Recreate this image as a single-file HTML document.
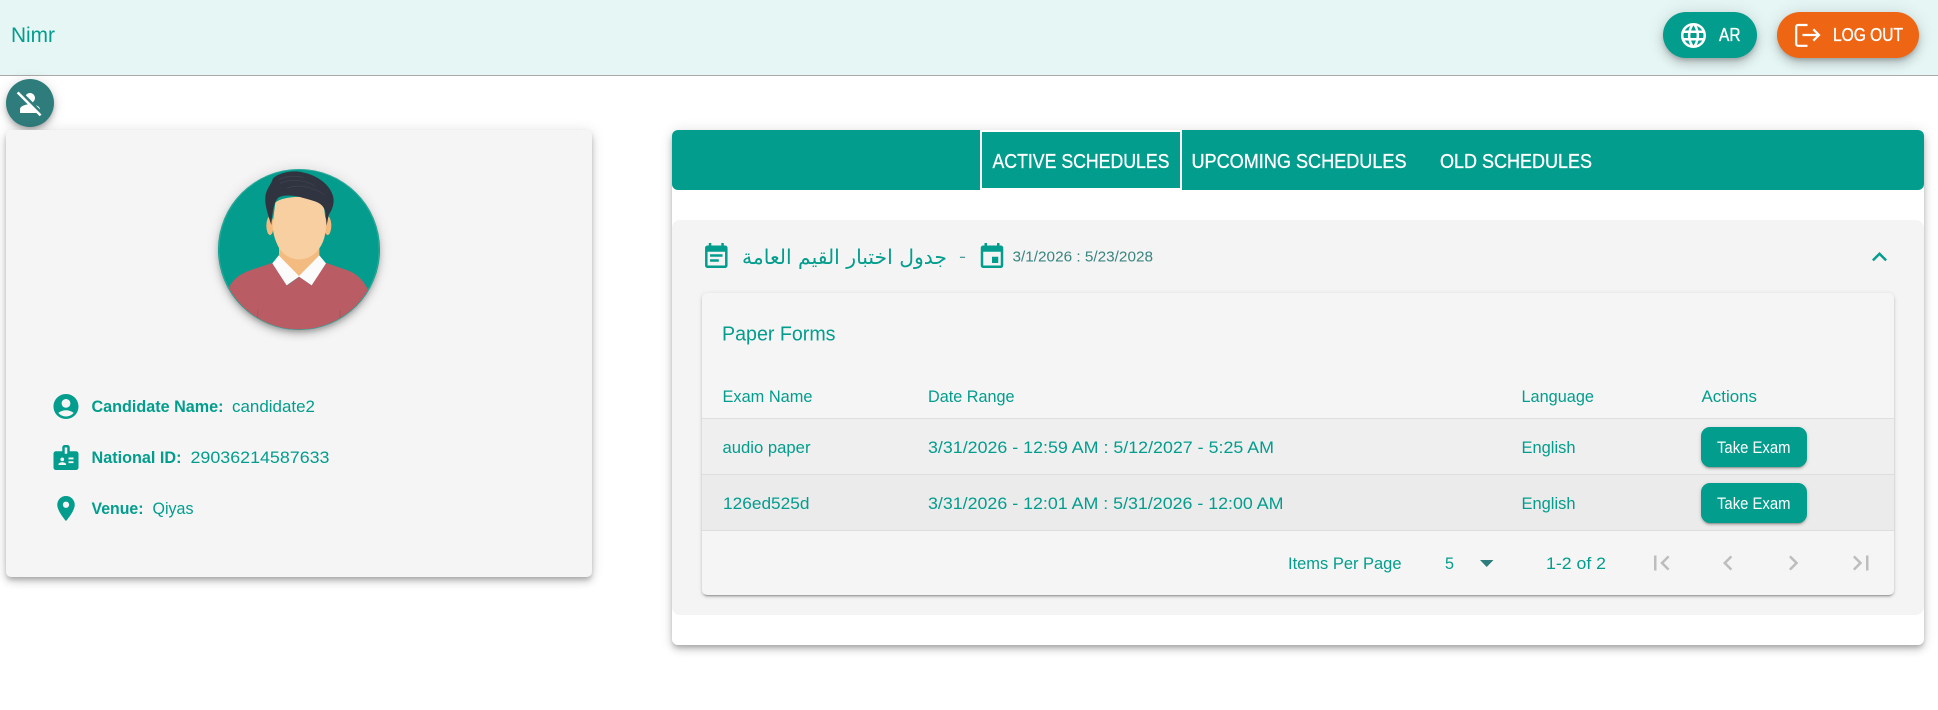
<!DOCTYPE html>
<html lang="en"><head><meta charset="utf-8"><title>Nimr</title>
<style>
html,body{margin:0;padding:0;width:1938px;height:710px;overflow:hidden;background:#fff}
.b{position:absolute;box-sizing:border-box}
.e8{box-shadow:0 3px 5px -1px rgba(0,0,0,.2),0 6px 10px 0 rgba(0,0,0,.14),0 1px 18px 0 rgba(0,0,0,.12)}
.e2{box-shadow:0 3px 1px -2px rgba(0,0,0,.2),0 2px 2px 0 rgba(0,0,0,.14),0 1px 5px 0 rgba(0,0,0,.12)}
.e5{box-shadow:0 3px 5px -1px rgba(0,0,0,.2),0 5px 8px 0 rgba(0,0,0,.14),0 1px 14px 0 rgba(0,0,0,.12)}
svg{position:absolute;left:0;top:0}
text{font-family:"Liberation Sans",sans-serif;fill:#039d8d;font-size:17px}
.w{fill:#fff}
.med{stroke:#fff;stroke-width:.35px}
.bd{font-weight:700}
.tab{font-size:20px;fill:#fff;stroke:#fff;stroke-width:.3px}
.ar{font-family:"DejaVu Sans","Liberation Sans",sans-serif;font-size:20.5px}
</style></head><body>
<div class="b" style="left:0;top:0;width:1938px;height:76px;background:#e6f6f5;border-bottom:1px solid #aaa"></div>
<div class="b e8" style="left:1663px;top:12px;width:94px;height:46px;border-radius:23px;background:#039d8d"></div>
<div class="b e8" style="left:1777px;top:12px;width:142px;height:46px;border-radius:23px;background:#ee6513"></div>
<div class="b e5" style="left:6px;top:79px;width:48px;height:48px;border-radius:50%;background:#2e7c7b"></div>
<div class="b e5" style="left:6px;top:130px;width:586px;height:447px;border-radius:5px;background:#f5f5f5"></div>
<div class="b e5" style="left:218px;top:169px;width:162px;height:161px;border-radius:50%;background:#039d8d"></div>
<div class="b e5" style="left:672px;top:130px;width:1252px;height:515px;border-radius:6px;background:#fff"></div>
<div class="b" style="left:672px;top:130px;width:1252px;height:60px;border-radius:6px;background:#039d8d"></div>
<div class="b" style="left:980px;top:130px;width:202px;height:60px;border:2px solid #fff;background:#039d8d"></div>
<div class="b" style="left:672px;top:220px;width:1252px;height:395px;border-radius:8px;background:#f4f4f4"></div>
<div class="b e2" style="left:702px;top:293px;width:1192px;height:302px;border-radius:5px;background:#f5f5f5"></div>
<div class="b" style="left:702px;top:418px;width:1192px;height:57px;background:#efefef;border-top:1px solid #dedede;border-bottom:1px solid #dedede"></div>
<div class="b" style="left:702px;top:475px;width:1192px;height:56px;background:#ebebeb;border-bottom:1px solid #dedede"></div>
<div class="b e2" style="left:1701px;top:427px;width:106px;height:40px;border-radius:9px;background:#039d8d"></div>
<div class="b e2" style="left:1701px;top:483px;width:106px;height:40px;border-radius:9px;background:#039d8d"></div>

<svg width="1938" height="710" viewBox="0 0 1938 710" xmlns="http://www.w3.org/2000/svg">
<defs><clipPath id="av"><circle cx="297" cy="268.5" r="240"/></clipPath></defs>

<text x="11" y="42" style="font-size:21px" textLength="44" lengthAdjust="spacingAndGlyphs">Nimr</text>

<!-- language -->
<path fill="#fff" transform="translate(1678.5,20.5) scale(1.25)" d="M11.99 2C6.47 2 2 6.48 2 12s4.47 10 9.99 10C17.52 22 22 17.52 22 12S17.52 2 11.99 2zm6.93 6h-2.95c-.32-1.25-.78-2.45-1.38-3.56 1.84.63 3.37 1.91 4.33 3.56zM12 4.04c.83 1.2 1.48 2.53 1.91 3.96h-3.82c.43-1.43 1.08-2.76 1.91-3.96zM4.26 14C4.1 13.36 4 12.69 4 12s.1-1.36.26-2h3.38c-.08.66-.14 1.32-.14 2 0 .68.06 1.34.14 2H4.26zm.82 2h2.95c.32 1.25.78 2.45 1.38 3.56-1.84-.63-3.37-1.9-4.33-3.56zm2.95-8H5.08c.96-1.66 2.49-2.93 4.33-3.56C8.81 5.55 8.35 6.75 8.03 8zM12 19.96c-.83-1.2-1.48-2.53-1.91-3.96h3.82c-.43 1.43-1.08 2.76-1.91 3.96zM14.34 14H9.66c-.09-.66-.16-1.32-.16-2 0-.68.07-1.35.16-2h4.68c.09.65.16 1.32.16 2 0 .68-.07 1.34-.16 2zm.25 5.56c.6-1.11 1.06-2.31 1.38-3.56h2.95c-.96 1.65-2.49 2.93-4.33 3.56zM16.36 14c.08-.66.14-1.32.14-2 0-.68-.06-1.34-.14-2h3.38c.16.64.26 1.31.26 2s-.1 1.36-.26 2h-3.38z"/>
<text class="w med" x="1719" y="41" style="font-size:18px" textLength="21.5" lengthAdjust="spacingAndGlyphs">AR</text>
<!-- logout -->
<path fill="none" stroke="#fff" stroke-width="2.2" d="M1807.5 25H1798a1.8 1.8 0 0 0-1.8 1.8V44a1.8 1.8 0 0 0 1.8 1.8h9.5"/>
<path fill="none" stroke="#fff" stroke-width="2.2" d="M1802.5 35H1819M1813.3 29.3L1819 35L1813.3 40.7"/>
<text class="w med" x="1833" y="41" style="font-size:18px" textLength="70" lengthAdjust="spacingAndGlyphs">LOG OUT</text>

<!-- person_off -->
<path fill="#fff" transform="translate(15,88) scale(1.25)" d="M8.65 5.82C9.36 4.72 10.6 4 12 4c2.21 0 4 1.79 4 4 0 1.4-.72 2.64-1.82 3.35L8.65 5.82zM20 17.17c-.02-1.1-.63-2.11-1.61-2.62-.54-.28-1.13-.54-1.77-.76L20 17.17zm1.19 4.02L2.81 2.81 1.39 4.22l8.89 8.89c-1.81.23-3.39.79-4.67 1.45C4.61 15.07 4 16.1 4 17.22V20h13.17l2.61 2.61 1.41-1.42z"/>

<!-- avatar -->
<g transform="translate(200,160) scale(.33333)">
<circle cx="297" cy="268.5" r="240" fill="#049c8d" stroke="#35ad9f" stroke-width="2"/>
<g clip-path="url(#av)">
<path fill="#b95c64" d="M85 387C100 352 130 337 165 326L222 307L262 376L297 350L335 376L374 307L440 330C470 340 490 360 506 392L506 540L85 540Z"/>
<path fill="none" stroke="#9c5a5c" stroke-width="3" d="M173 450V475M420 450V475"/>
</g>
<path fill="#f3bb7f" d="M237 250V290L297 350L358 290V250Z"/>
<path fill="#fbfbfb" d="M236 286L217 310L260 376L297 350L335 376L378 310L358 286L297 348Z"/>
<ellipse cx="210" cy="197" rx="11" ry="28" fill="#f3bb7f"/>
<ellipse cx="383" cy="197" rx="11" ry="28" fill="#f3bb7f"/>
<path fill="#f7cfa0" d="M226 128C250 106 340 104 370 128L378 190C378 230 368 250 360 262C340 292 315 298 297 298C280 298 255 292 236 262C228 245 218 225 218 190Z"/>
<path fill="#2f3440" d="M214 195C206 170 193 135 196 110C199 85 213 75 219 55C240 36 282 30 308 37C350 45 388 72 398 105C406 128 396 150 386 165L380 197L376 155C370 135 358 128 338 122C300 110 262 100 236 112C222 125 218 150 214 195Z"/>
<path fill="none" stroke="#3f4450" stroke-width="2" d="M240 70C270 55 320 60 345 78M260 85C290 72 335 78 375 105M235 60C260 45 290 48 310 52"/>
</g>

<!-- info rows -->
<path fill="#039d8d" transform="translate(51,391.5) scale(1.25)" d="M12 2C6.48 2 2 6.48 2 12s4.48 10 10 10 10-4.48 10-10S17.52 2 12 2zm0 4c1.93 0 3.5 1.57 3.5 3.5S13.93 13 12 13s-3.5-1.57-3.5-3.5S10.07 6 12 6zm0 14c-2.03 0-4.43-.82-6.14-2.88C7.55 15.8 9.68 15 12 15s4.45.8 6.14 2.12C16.43 19.18 14.03 20 12 20z"/>
<text class="bd" x="91.5" y="412" textLength="132" lengthAdjust="spacingAndGlyphs">Candidate Name:</text>
<text x="232" y="412" textLength="83" lengthAdjust="spacingAndGlyphs">candidate2</text>
<path fill="#039d8d" transform="translate(51,442.5) scale(1.25)" d="M20 7h-5V4c0-1.1-.9-2-2-2h-2c-1.1 0-2 .9-2 2v3H4c-1.1 0-2 .9-2 2v11c0 1.1.9 2 2 2h16c1.1 0 2-.9 2-2V9c0-1.1-.9-2-2-2zM9 12c.83 0 1.5.67 1.5 1.5S9.83 15 9 15s-1.5-.67-1.5-1.5S8.17 12 9 12zm3 6H6v-.75c0-1 2-1.5 3-1.5s3 .5 3 1.5V18zm1-9h-2V4h2v5zm5 7.5h-4V15h4v1.5zm0-3h-4V12h4v1.5z"/>
<text class="bd" x="91.5" y="463" textLength="90" lengthAdjust="spacingAndGlyphs">National ID:</text>
<text x="190.5" y="463" textLength="139" lengthAdjust="spacingAndGlyphs">29036214587633</text>
<path fill="#039d8d" transform="translate(51,493.5) scale(1.25)" d="M12 2C8.13 2 5 5.13 5 9c0 5.25 7 13 7 13s7-7.75 7-13c0-3.87-3.13-7-7-7zm0 9.5c-1.38 0-2.5-1.12-2.5-2.5s1.12-2.5 2.5-2.5 2.5 1.12 2.5 2.5-1.12 2.5-2.5 2.5z"/>
<text class="bd" x="91.5" y="514" textLength="52" lengthAdjust="spacingAndGlyphs">Venue:</text>
<text x="152.5" y="514" textLength="41" lengthAdjust="spacingAndGlyphs">Qiyas</text>

<!-- tabs -->
<text class="tab" x="992.5" y="168" textLength="177" lengthAdjust="spacingAndGlyphs">ACTIVE SCHEDULES</text>
<text class="tab" x="1191.5" y="168" textLength="215" lengthAdjust="spacingAndGlyphs">UPCOMING SCHEDULES</text>
<text class="tab" x="1440" y="168" textLength="152" lengthAdjust="spacingAndGlyphs">OLD SCHEDULES</text>

<!-- accordion header -->
<path fill="#039d8d" transform="translate(701.3,241.7) scale(1.25)" d="M17 10H7v2h10v-2zm2-7h-1V1h-2v2H8V1H6v2H5c-1.11 0-1.99.9-1.99 2L3 19c0 1.1.89 2 2 2h14c1.1 0 2-.9 2-2V5c0-1.1-.9-2-2-2zm0 16H5V8h14v11zm-5-5H7v2h7v-2z"/>
<text class="ar" x="742" y="264" textLength="205" lengthAdjust="spacingAndGlyphs">جدول اختبار القيم العامة</text>
<text x="959" y="262" style="font-size:17px;fill:#4f9f98" textLength="7" lengthAdjust="spacingAndGlyphs">-</text>
<path fill="#039d8d" transform="translate(977,241.7) scale(1.25)" d="M17 12h-5v5h5v-5zM16 1v2H8V1H6v2H5c-1.11 0-1.99.9-1.99 2L3 19c0 1.1.89 2 2 2h14c1.1 0 2-.9 2-2V5c0-1.1-.9-2-2-2h-1V1h-2zm3 18H5V8h14v11z"/>
<text x="1012.5" y="261.5" style="font-size:14.5px;fill:#38857f" textLength="140.5" lengthAdjust="spacingAndGlyphs">3/1/2026 : 5/23/2028</text>
<path fill="#039d8d" transform="translate(1864.5,242) scale(1.25)" d="M12 8l-6 6 1.41 1.41L12 10.83l4.59 4.58L18 14z"/>

<text x="722" y="340.5" style="font-size:20px" textLength="113.5" lengthAdjust="spacingAndGlyphs">Paper Forms</text>

<!-- table -->
<text x="722.5" y="402" textLength="90" lengthAdjust="spacingAndGlyphs">Exam Name</text>
<text x="928" y="402" textLength="86.5" lengthAdjust="spacingAndGlyphs">Date Range</text>
<text x="1521.5" y="402" textLength="72.5" lengthAdjust="spacingAndGlyphs">Language</text>
<text x="1701.5" y="402" textLength="55.5" lengthAdjust="spacingAndGlyphs">Actions</text>

<text x="722.5" y="453" textLength="88" lengthAdjust="spacingAndGlyphs">audio paper</text>
<text x="928" y="453" textLength="346" lengthAdjust="spacingAndGlyphs">3/31/2026 - 12:59 AM : 5/12/2027 - 5:25 AM</text>
<text x="1521.5" y="453" textLength="54" lengthAdjust="spacingAndGlyphs">English</text>
<text class="w" x="1717" y="453" style="font-size:16.5px" textLength="73.5" lengthAdjust="spacingAndGlyphs">Take Exam</text>

<text x="723" y="509" textLength="86.5" lengthAdjust="spacingAndGlyphs">126ed525d</text>
<text x="928" y="509" textLength="355.5" lengthAdjust="spacingAndGlyphs">3/31/2026 - 12:01 AM : 5/31/2026 - 12:00 AM</text>
<text x="1521.5" y="509" textLength="54" lengthAdjust="spacingAndGlyphs">English</text>
<text class="w" x="1717" y="509" style="font-size:16.5px" textLength="73.5" lengthAdjust="spacingAndGlyphs">Take Exam</text>

<!-- paginator -->
<text x="1288" y="569" textLength="113.5" lengthAdjust="spacingAndGlyphs">Items Per Page</text>
<text x="1445" y="569" textLength="9" lengthAdjust="spacingAndGlyphs">5</text>
<path fill="#2e7c7b" d="M1480 560H1493.5L1486.7 567Z"/>
<text x="1546" y="569" textLength="60" lengthAdjust="spacingAndGlyphs">1-2 of 2</text>
<g fill="#bdbdbd">
<path transform="translate(1646.5,548) scale(1.25)" d="M18.41 16.59L13.82 12l4.59-4.59L17 6l-6 6 6 6zM6 6h2v12H6z"/>
<path transform="translate(1713,548) scale(1.25)" d="M15.41 7.41L14 6l-6 6 6 6 1.41-1.41L10.83 12z"/>
<path transform="translate(1778.3,548) scale(1.25)" d="M10 6L8.59 7.41 13.17 12l-4.58 4.59L10 18l6-6z"/>
<path transform="translate(1846,548) scale(1.25)" d="M5.59 7.41L10.18 12l-4.59 4.59L7 18l6-6-6-6zM16 6h2v12h-2z"/>
</g>
</svg>
</body></html>
